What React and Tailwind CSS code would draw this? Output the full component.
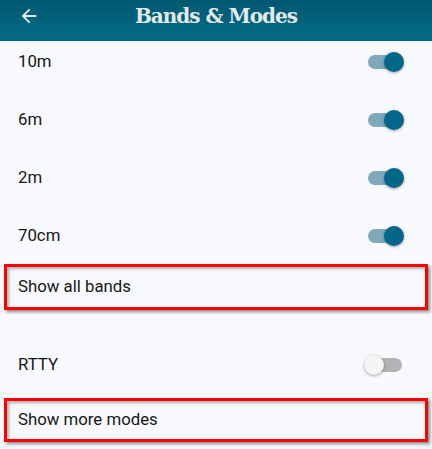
function Toggle({ on }) {
  return (
    <div className="relative w-[40px] h-[20px] flex items-center">
      <div
        className={`mx-[3px] h-[14px] w-[34px] rounded-full ${on ? 'bg-[#7fa8b8]' : 'bg-[#b3b3b3]'}`}
      />
      <div
        className={`absolute top-0 h-[20px] w-[20px] rounded-full shadow-[0_1px_3px_rgba(0,0,0,0.35)] ${
          on ? 'left-[19px] bg-[#03678a]' : 'left-[-1px] bg-[#f5f5f5]'
        }`}
      />
    </div>
  );
}

function Row({ label, on, className = 'h-[58px]' }) {
  return (
    <div className={`flex items-center justify-between pl-[18px] pr-[27px] ${className}`}>
      <span className="text-[16.8px] text-[#161616]">{label}</span>
      <Toggle on={on} />
    </div>
  );
}

function Highlighted({ label, className }) {
  return (
    <div
      className={`mx-[4px] flex items-center border-[3px] border-[#ff0000] pl-[11px] shadow-[2px_2px_3px_rgba(0,0,0,0.45),inset_2px_2px_3px_rgba(0,0,0,0.3)] ${className}`}
    >
      <span className="text-[16.8px] text-[#161616]">{label}</span>
    </div>
  );
}

export default function App() {
  return (
    <div className="w-[432px] h-[449px] overflow-hidden bg-[#f8f9fc] font-['Roboto',sans-serif]">
      <header className="relative h-[41px] bg-gradient-to-b from-[#005870] to-[#046c86] flex items-center justify-center">
        <svg
          viewBox="0 0 24 24"
          className="absolute left-[18px] top-[5px] h-[22px] w-[22px] fill-[#e6eef2]"
        >
          <path d="M20 11H7.83l5.59-5.59L12 4l-8 8 8 8 1.41-1.41L7.83 13H20v-2z" />
        </svg>
        <h1 className="-mt-[10px] font-['DejaVu_Serif',serif] font-bold text-[20px] tracking-[-1px] text-[#e4e9ec]">
          Bands &amp; Modes
        </h1>
      </header>

      <Row label="10m" on className="h-[50px] pb-[8px]" />
      <Row label="6m" on />
      <Row label="2m" on />
      <Row label="70cm" on />

      <Highlighted label="Show all bands" className="-mt-px h-[46px]" />

      <div className="h-[30px]" />
      <Row label="RTTY" on={false} className="h-[50px]" />
      <div className="h-[8px]" />

      <Highlighted label="Show more modes" className="h-[44px]" />
    </div>
  );
}
